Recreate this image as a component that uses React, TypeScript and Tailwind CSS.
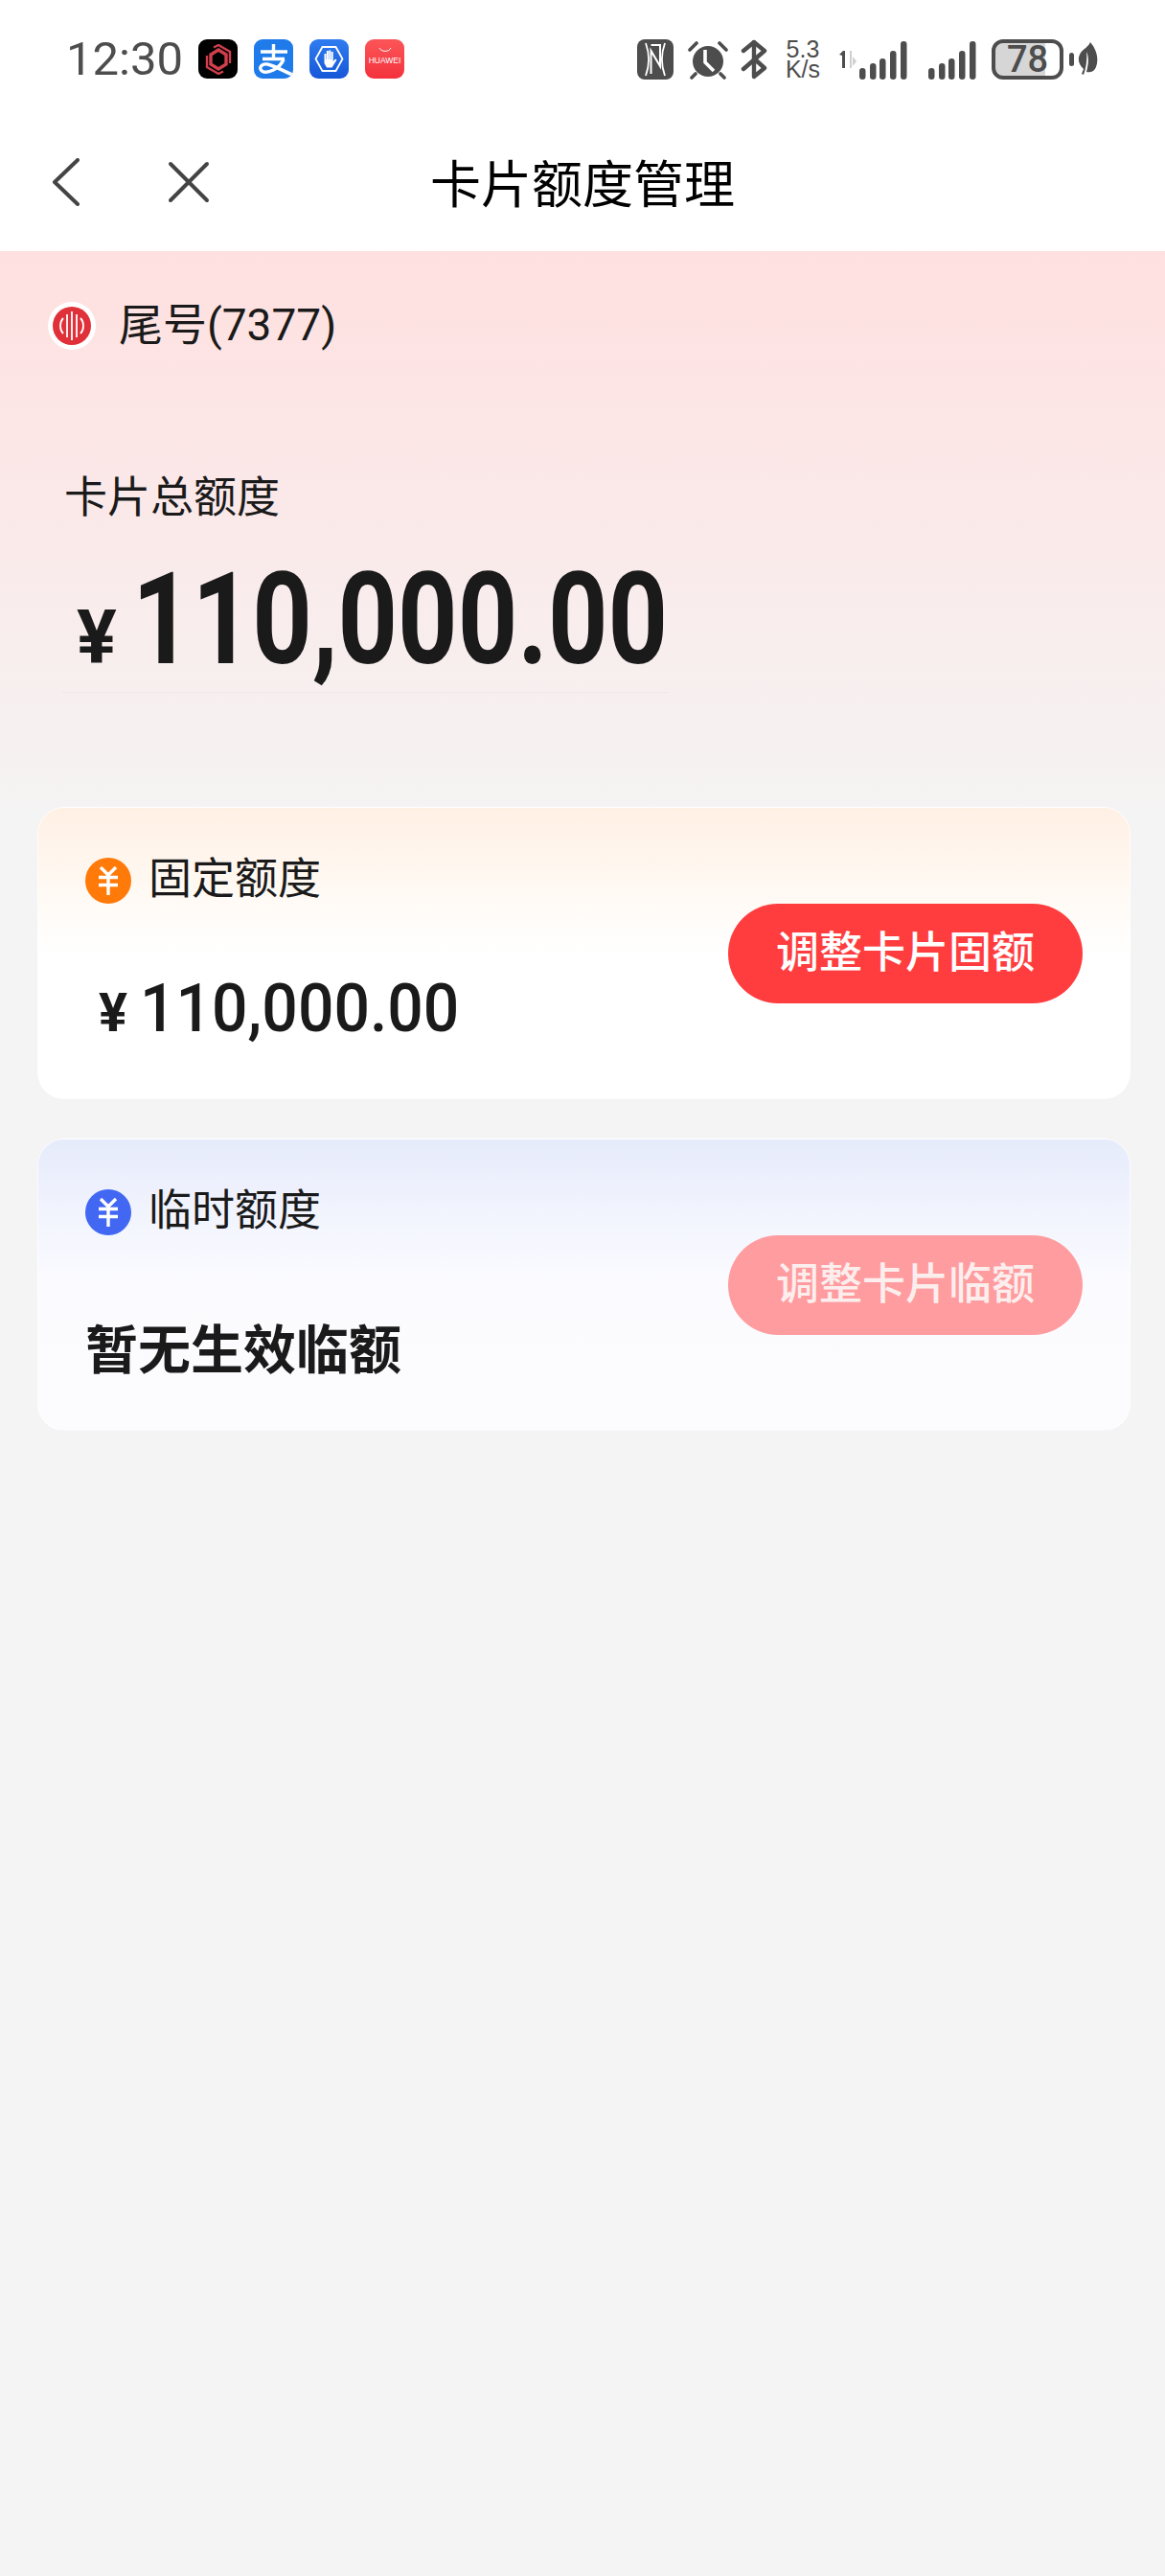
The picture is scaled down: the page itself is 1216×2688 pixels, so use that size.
import React from "react";

const CJK = "font-['Roboto','Noto_Sans_CJK_SC',sans-serif]";

function AppIcons() {
  return (
    <div className="ml-[16px] flex gap-[17px]">
      <div className="flex h-[41px] w-[41px] items-center justify-center rounded-[9px] bg-black">
        <svg width="30" height="32" viewBox="0 0 30 32" fill="none" stroke="#d13f4c" strokeWidth="3.4">
          <path d="M15 6 L23 11 V21 L15 26 L7 21 V11 Z" />
          <path d="M10 3.5 L15 1 L27 8 V20" strokeWidth="2.4" />
          <path d="M20 28.5 L15 31 L3 24 V12" strokeWidth="2.4" />
        </svg>
      </div>
      <div className="h-[41px] w-[41px] overflow-hidden rounded-[9px] bg-[#1f7bea]">
        <svg width="41" height="41" viewBox="0 0 41 41" fill="none" stroke="#fff" strokeWidth="3.4">
          <path d="M7 13 H35 M20.5 5 V20 M9 20.5 H32" />
          <path d="M31 21 C27 31 14 36 9 33.5 C4 30.5 8 25 14 26 C22 27.5 32 34 43 38" />
        </svg>
      </div>
      <div className="flex h-[41px] w-[41px] items-center justify-center rounded-[9px] bg-gradient-to-b from-[#2f7cf0] to-[#1857d8]">
        <svg width="31" height="29" viewBox="0 0 31 29">
          <path d="M8.5 2 H22.5 L29.5 14.5 L22.5 27 H8.5 L1.5 14.5 Z" fill="none" stroke="#fff" strokeWidth="1.8" />
          <path d="M10.5 9 h2 v6 h0.4 V6 h2 v9 h0.4 V5.5 h2 V15 h0.4 V7 h2 v10 l2.2 -2.6 l1.6 1.2 L18.5 23.5 H13 L10.5 19 Z" fill="#fff" />
        </svg>
      </div>
      <div className="flex h-[41px] w-[41px] flex-col items-center rounded-[9px] bg-gradient-to-b from-[#fb5558] to-[#f4303d] pt-[8px]">
        <svg width="14" height="6" viewBox="0 0 14 6" fill="none" stroke="#fff" strokeWidth="1">
          <path d="M1 1 C3 5.5 11 5.5 13 1" />
        </svg>
        <span className="mt-[3px] font-['Liberation_Sans',sans-serif] text-[8.5px] leading-[10px] text-white">HUAWEI</span>
      </div>
    </div>
  );
}

function Bars({ width }: { width: number }) {
  const bars = [
    { x: 3, y: 28 },
    { x: 14, y: 23 },
    { x: 24, y: 18 },
    { x: 35, y: 10 },
    { x: 46, y: 0 },
  ];
  return (
    <svg width={width} height="40" viewBox={`0 0 ${width} 40`}>
      {bars.map((b) => (
        <rect key={b.x} x={b.x - 3} y={b.y} width="6.5" height={40 - b.y} rx="3.2" fill="#4d4d4d" />
      ))}
    </svg>
  );
}

function StatusIcons() {
  return (
    <div className="ml-auto flex items-center text-[#4d4d4d]">
      <svg width="38" height="42" viewBox="0 0 38 42">
        <rect width="38" height="42" rx="8" fill="#4d4d4d" />
        <path d="M9 4 C13 15 13 27 9 38 M29 4 C25 15 25 27 29 38" stroke="#fff" strokeWidth="1.8" fill="none" />
        <path d="M14.5 36 V12 L24 28 V6 L14.5 6" stroke="#fff" strokeWidth="2" fill="none" />
      </svg>
      <svg className="ml-[15px]" width="42" height="42" viewBox="0 0 42 42">
        <circle cx="21" cy="23" r="16" fill="#4d4d4d" />
        <path d="M2 11 L9 4 M33 4 L40 11 M8 36 L4 40 M34 36 L38 40" stroke="#4d4d4d" strokeWidth="3.6" strokeLinecap="round" />
        <path d="M18 11 V24 L27 33" stroke="#fff" strokeWidth="3.6" fill="none" />
      </svg>
      <svg className="ml-[13px]" width="28" height="42" viewBox="0 0 28 42" fill="none" stroke="#4d4d4d" strokeWidth="4.4" strokeLinejoin="round" strokeLinecap="round">
        <path d="M3 12 L14 3 V39 L25 30 L14 20" />
        <path d="M14 3 L25 12 L3 31" />
      </svg>
      <div className="ml-[17px] w-[40px] text-center font-['Liberation_Sans',sans-serif] text-[25px] leading-[21px]">
        5.3
        <br />
        K/s
      </div>
      <svg className="ml-[17px]" width="20" height="22" viewBox="0 0 20 22">
        <path d="M1 6 L5 2 H7 V20 H4 V7 Z" fill="#4d4d4d" />
        <path d="M12 2 H14 V20 L12 20 Z M15 8 L19 13 L15 18 Z" fill="#cfcfcf" />
      </svg>
      <div className="ml-[2px] mt-[2px]">
        <Bars width={50} />
      </div>
      <div className="ml-[22px] mt-[2px]">
        <Bars width={50} />
      </div>
      <div className="ml-[16px] flex h-[42px] w-[75px] items-center justify-center rounded-[12px] border-[4px] border-[#4d4d4d] bg-[linear-gradient(90deg,#d6d6d6_78%,#ffffff_78%)] font-['Roboto',sans-serif] text-[38px] font-medium leading-none">
        78
      </div>
      <div className="ml-[6px] h-[14px] w-[5px] rounded-full bg-[#4d4d4d]" />
      <svg className="ml-[4px]" width="21" height="36" viewBox="0 0 21 36">
        <path d="M13 0 C20 8 22 18 19 26 C17 31 12 32 9 31 C11 24 12 16 9 10 C10 16 9 26 6 34 L4 33 L6 28 C1 24 -1 17 3 11 C6 7 11 5 13 0 Z" fill="#4d4d4d" />
      </svg>
    </div>
  );
}

function YuanBadge({ color }: { color: string }) {
  return (
    <div className={`flex h-[48px] w-[48px] items-center justify-center rounded-full ${color}`}>
      <svg width="24" height="30" viewBox="0 0 24 30" fill="none" stroke="#fff" strokeWidth="3.4">
        <path d="M4 1 L12 9 L20 1 M12 9 V30 M2 11.5 H22 M2 19.5 H22" />
      </svg>
    </div>
  );
}

function QuotaCard({
  gradient,
  badge,
  label,
  button,
  buttonClass,
  children,
}: {
  gradient: string;
  badge: string;
  label: string;
  button: string;
  buttonClass: string;
  children: React.ReactNode;
}) {
  return (
    <div className={`flex h-[305px] items-center justify-between rounded-[28px] border border-white/70 pl-[49px] pr-[49px] ${gradient}`}>
      <div className="flex flex-col self-stretch pt-[52px]">
        <div className="flex h-[48px] items-center">
          <YuanBadge color={badge} />
          <span className="ml-[18px] -translate-y-[2px] text-[45px] leading-none text-[#1a1a1a]">{label}</span>
        </div>
        {children}
      </div>
      <button className={`flex h-[104px] w-[370px] items-center justify-center rounded-full text-[45px] leading-none ${buttonClass}`}>
        {button}
      </button>
    </div>
  );
}

export default function App() {
  return (
    <div className={`min-h-[2688px] bg-[#f4f4f4] ${CJK}`}>
      <div className="bg-white">
        <div className="flex h-[123px] items-center pl-[69px] pr-[70px]">
          <span className="font-['Roboto',sans-serif] text-[49px] leading-none text-[#4d4d4d]">12:30</span>
          <AppIcons />
          <StatusIcons />
        </div>
        <div className="grid h-[139px] grid-cols-[1fr_auto_1fr] items-center">
          <div className="flex items-center pb-[6px] pl-[54px]">
            <svg width="29" height="50" viewBox="0 0 29 50" fill="none" stroke="#444" strokeWidth="4" strokeLinecap="round" strokeLinejoin="round">
              <path d="M27 2 L3 25 L27 48" />
            </svg>
            <svg className="ml-[92px]" width="44" height="44" viewBox="0 0 44 44" fill="none" stroke="#444" strokeWidth="4" strokeLinecap="round">
              <path d="M3 3 L41 41 M41 3 L3 41" />
            </svg>
          </div>
          <h1 className="pt-[4px] text-[53px] font-normal leading-none text-black">卡片额度管理</h1>
          <div />
        </div>
      </div>

      <div className="h-[580px] bg-gradient-to-b from-[#ffe0e0] to-[#f5f3f3] pt-[53px]">
        <div className="flex items-center pl-[50px]">
          <div className="flex h-[50px] w-[50px] items-center justify-center rounded-full bg-white">
            <svg width="40" height="40" viewBox="0 0 40 40">
              <circle cx="20" cy="20" r="20" fill="#e0303a" />
              <path d="M11 12 C7 16 7 24 11 28 M15 8 V32 M20 5 V35 M25 8 V32 M29 12 C33 16 33 24 29 28" stroke="#fff" strokeWidth="1.8" fill="none" />
            </svg>
          </div>
          <span className="ml-[24px] -translate-y-[1px] text-[46px] leading-none text-[#1a1a1a]">尾号(7377)</span>
        </div>

        <div className="pl-[67px] pt-[132px] text-[45px] leading-none text-[#1a1a1a]">卡片总额度</div>

        <div className="ml-[65px] mt-[44px] flex h-[137px] w-[633px] items-baseline border-b border-[#f0e6e6] pl-[15px] text-[#1a1a1a]">
          <span className="text-[78px] font-bold leading-[122px]">¥</span>
          <span className="ml-[16px] inline-block origin-left scale-x-[0.82] text-[133px] font-bold leading-[122px]">110,000.00</span>
        </div>
      </div>

      <div className="flex flex-col gap-[41px] pl-[39px] pr-[36px]">
        <QuotaCard
          gradient="bg-[linear-gradient(180deg,#fff0e4_0%,#fff9f3_28%,#ffffff_50%)]"
          badge="bg-[#ff7a09]"
          label="固定额度"
          button="调整卡片固额"
          buttonClass="bg-[#ff3d3f] font-medium text-white"
        >
          <div className="mt-[74px] flex items-baseline pl-[14px] text-[#1a1a1a]">
            <span className="text-[56px] font-bold leading-[70px]">¥</span>
            <span className="ml-[13px] inline-block origin-left scale-x-[0.93] text-[71px] font-medium leading-[70px]">110,000.00</span>
          </div>
        </QuotaCard>
        <QuotaCard
          gradient="bg-[linear-gradient(180deg,#e6ebfb_0%,#f3f5fe_28%,#fbfbff_50%,#fcfcfe_100%)]"
          badge="bg-[#4268f3]"
          label="临时额度"
          button="调整卡片临额"
          buttonClass="bg-[#ff9c9f] font-medium text-[#fdeeee]"
        >
          <div className="mt-[93px] text-[55px] font-bold leading-none text-[#1a1a1a]">暂无生效临额</div>
        </QuotaCard>
      </div>
    </div>
  );
}
